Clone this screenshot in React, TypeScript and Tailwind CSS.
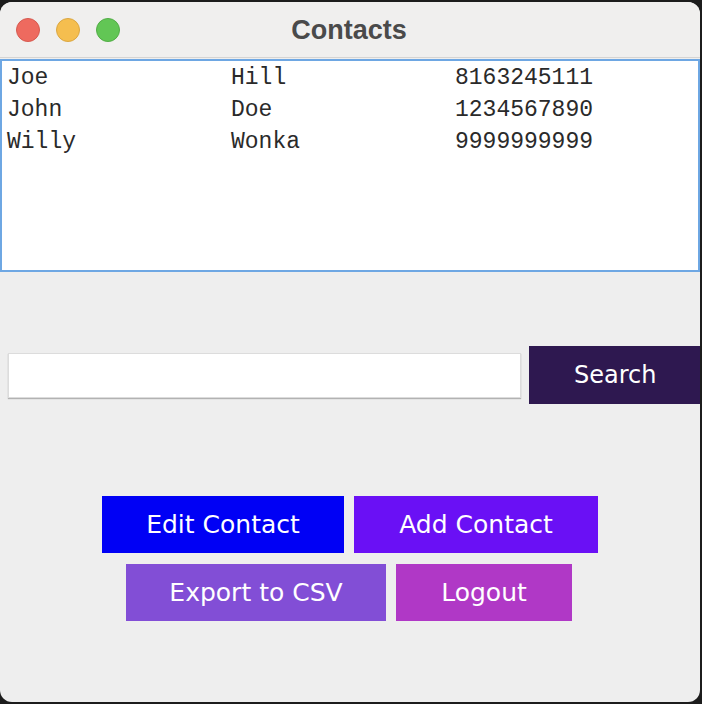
import React from "react";

const rows = [
  ["Joe", "Hill", "8163245111"],
  ["John", "Doe", "1234567890"],
  ["Willy", "Wonka", "9999999999"],
];

export default function App() {
  return (
    <div className="w-[702px] h-[704px] bg-[#1c1c1c] pt-[2px] overflow-hidden">
      <div className="w-[700px] h-[700px] bg-[#eeeeee] rounded-[12px] overflow-hidden flex flex-col">
        {/* title bar */}
        <div className="h-[56px] bg-[#f0efee] border-b border-[#d6d4d2] flex items-center relative shrink-0">
          <div className="flex gap-[16px] pl-[16px]">
            <div className="w-[24px] h-[24px] rounded-full bg-[#ee6a5f] border border-[#d65a50]" />
            <div className="w-[24px] h-[24px] rounded-full bg-[#f5be4f] border border-[#dba742]" />
            <div className="w-[24px] h-[24px] rounded-full bg-[#62c655] border border-[#52ad46]" />
          </div>
          <div
            className="absolute inset-0 flex items-center justify-center text-[27px] font-bold text-[#4a4a4a] pt-[2px] pr-[2px]"
            style={{ fontFamily: "'Liberation Sans', Arial, sans-serif" }}
          >
            Contacts
          </div>
        </div>
        {/* table */}
        <div className="mt-[1px] h-[213px] bg-white border-2 border-[#6ea7e3] shrink-0 pt-[1px]">
          {rows.map((r, i) => (
            <div
              key={i}
              className="flex h-[32px] items-center text-[23px] text-[#2a2a2a]"
              style={{ fontFamily: "'Courier New', Courier, 'Liberation Mono', monospace" }}
            >
              {r.map((c, j) => (
                <div key={j} className="w-[224px] pl-[5px]">
                  {c}
                </div>
              ))}
            </div>
          ))}
        </div>
        {/* search */}
        <div className="flex items-center mt-[74px] pl-[8px] gap-[8px]">
          <div className="w-[514px] h-[45px] bg-white border border-[#dcdcdc] shadow-[0_1px_1px_rgba(0,0,0,0.25)]" />
          <div
            className="w-[172px] h-[58px] bg-[#2e1850] text-white text-[24px] flex items-center justify-center pl-[2px]"
            style={{ fontFamily: "'DejaVu Sans', sans-serif" }}
          >
            Search
          </div>
        </div>
        {/* buttons */}
        <div
          className="flex flex-col items-center gap-[11px] mt-[92px] text-white text-[25px]"
          style={{ fontFamily: "'DejaVu Sans', sans-serif" }}
        >
          <div className="flex gap-[10px]">
            <div className="w-[242px] h-[57px] bg-[#0000f5] flex items-center justify-center">Edit Contact</div>
            <div className="w-[244px] h-[57px] bg-[#6a10f5] flex items-center justify-center">Add Contact</div>
          </div>
          <div className="flex gap-[10px] pr-[2px]">
            <div className="w-[260px] h-[57px] bg-[#824ed6] flex items-center justify-center">Export to CSV</div>
            <div className="w-[176px] h-[57px] bg-[#b038c6] flex items-center justify-center">Logout</div>
          </div>
        </div>
      </div>
    </div>
  );
}
